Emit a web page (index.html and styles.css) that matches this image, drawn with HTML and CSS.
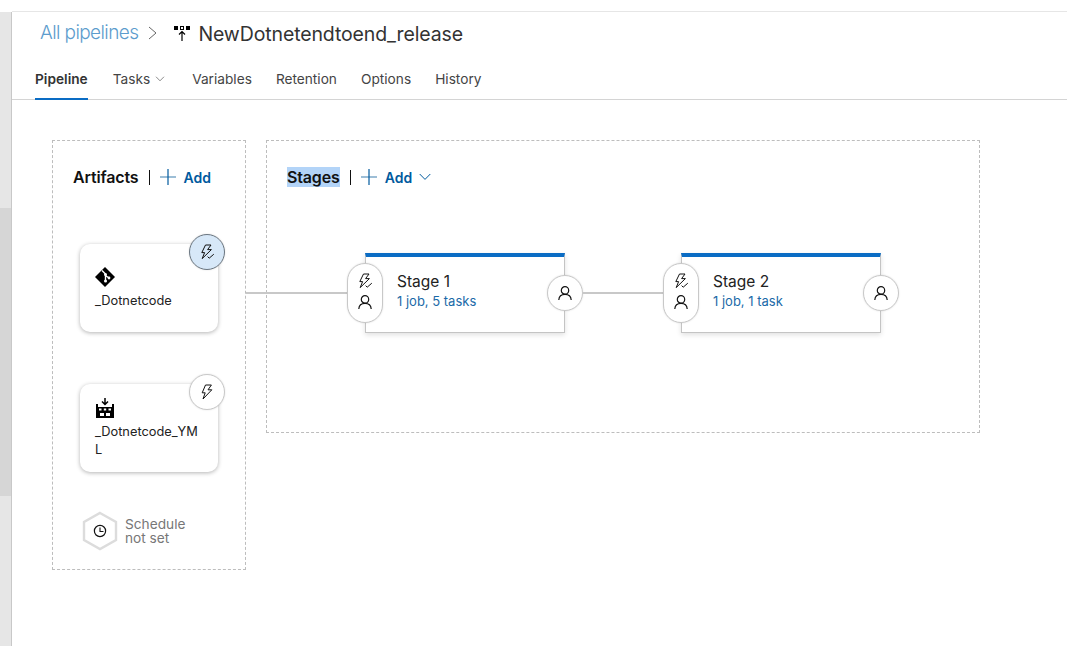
FILE: index.html
```html
<!DOCTYPE html>
<html lang="en">
<head>
<meta charset="UTF-8">
<meta name="viewport" content="width=device-width, initial-scale=1.0">
<title>NewDotnetendtoend_release</title>
<link rel="stylesheet" href="styles.css">
</head>
<body>

<svg class="icon-defs" width="0" height="0" aria-hidden="true">
    <symbol id="bolt-check" viewBox="0 0 16 16">
        <path d="M6.5 1H12L8.6 5.6H12.4L3.2 14.6L5.6 8.6H2.8Z" fill="none" stroke="currentColor" stroke-width="1"/>
        <path d="M8.6 12.6L10.2 14.2L14.8 10.2" fill="none" stroke="currentColor" stroke-width="1"/>
    </symbol>
    <symbol id="bolt" viewBox="0 0 16 16">
        <path d="M6.5 1H12.4L9 5.8H12.8L4 15L6.2 8.8H3.2Z" fill="none" stroke="currentColor" stroke-width="1"/>
    </symbol>
    <symbol id="person" viewBox="0 0 16 16">
        <circle cx="8" cy="5.4" r="3.7" fill="none" stroke="currentColor" stroke-width="1.2"/>
        <path d="M1.8 15C2 11.6 4.4 9.4 8 9.4S14 11.6 14.2 15" fill="none" stroke="currentColor" stroke-width="1.2"/>
    </symbol>
    <symbol id="plus" viewBox="0 0 16 16">
        <path d="M0 8H16" stroke="#5d93bb" stroke-width="1.2"/>
        <path d="M8 0V16" stroke="#005a9e" stroke-width="1.2"/>
    </symbol>
    <symbol id="chevron" viewBox="0 0 12 8">
        <path d="M.7 1L6 6.4L11.3 1" fill="none" stroke="currentColor" stroke-width="1"/>
    </symbol>
</svg>

<div class="app">
    <div class="rail">
        <div class="rail-thumb"></div>
    </div>

    <div class="main">
        <div class="title-row">
            <a class="crumb" href="#">All pipelines</a>
            <svg class="crumb-sep" width="9" height="14" viewBox="0 0 9 14"><path d="M1 1L8 7L1 13" fill="none" stroke="#666" stroke-width="1"/></svg>
            <svg class="release-icon" width="16" height="16" viewBox="0 0 16 16">
                <rect x="0" y="1" width="4" height="4"/>
                <rect x="6.5" y="1.5" width="3" height="3" fill="none" stroke="#000"/>
                <rect x="12" y="1" width="4" height="4"/>
                <path d="M8 16V7M5 9.5L8 6.5L11 9.5" fill="none" stroke="#000" stroke-width="1.2"/>
            </svg>
            <h1 class="title">NewDotnetendtoend_release</h1>
        </div>

        <div class="tabs">
            <a class="tab active" href="#">Pipeline</a>
            <a class="tab" href="#">Tasks <svg class="tab-chevron" width="10" height="6"><use href="#chevron"/></svg></a>
            <a class="tab" href="#">Variables</a>
            <a class="tab" href="#">Retention</a>
            <a class="tab" href="#">Options</a>
            <a class="tab" href="#">History</a>
        </div>

        <div class="canvas">
            <div class="box artifacts">
                <div class="box-head">
                    <span class="box-title">Artifacts</span>
                    <span class="divider"></span>
                    <a class="add" href="#"><svg width="16" height="16"><use href="#plus"/></svg>Add</a>
                </div>

                <div class="artifact first">
                    <svg class="artifact-icon" width="20" height="20" viewBox="0 0 20 20">
                        <path d="M10 0L20 10L10 20L0 10Z" fill="#000"/>
                        <path d="M7 3.5L10.5 7V15M10.5 8.5L14 11" fill="none" stroke="#fff" stroke-width="1.4"/>
                        <circle cx="10.5" cy="7.5" r="1.5" fill="#fff"/>
                        <circle cx="10.5" cy="14" r="1.5" fill="#fff"/>
                        <circle cx="14" cy="11" r="1.4" fill="#fff"/>
                    </svg>
                    <div class="artifact-name">_Dotnetcode</div>
                    <span class="badge active"><svg width="16" height="16"><use href="#bolt-check"/></svg></span>
                </div>

                <div class="artifact">
                    <svg class="artifact-icon" width="20" height="20" viewBox="0 0 20 20">
                        <path d="M10 0V6M7 3.5L10 6.5L13 3.5" fill="none" stroke="#000" stroke-width="1.5"/>
                        <path d="M1 6H3V9H17V6H19V20H1Z" fill="#000"/>
                        <path d="M4 10.5H6.5V12.5H4ZM8.8 10.5H11.2V12.5H8.8ZM13.5 10.5H16V12.5H13.5ZM5 15H9V18H5ZM11 15H15V18H11Z" fill="#fff"/>
                    </svg>
                    <div class="artifact-name">_Dotnetcode_YML</div>
                    <span class="badge"><svg width="16" height="16"><use href="#bolt"/></svg></span>
                </div>

                <div class="schedule">
                    <svg class="hexagon" width="36" height="40" viewBox="0 0 36 40">
                        <path d="M18 2L34 11V29L18 38L2 29V11Z" fill="#fff" stroke="#dcdcdc" stroke-width="2.4"/>
                        <circle cx="18" cy="20" r="5.6" fill="none" stroke="#111" stroke-width="1.2"/>
                        <path d="M18 16.5V20.5H21.5" fill="none" stroke="#111" stroke-width="1.1"/>
                    </svg>
                    <span class="schedule-text">Schedule<br>not set</span>
                </div>
            </div>

            <div class="box stages">
                <div class="box-head">
                    <span class="box-title selected">Stages</span>
                    <span class="divider"></span>
                    <a class="add" href="#"><svg width="16" height="16"><use href="#plus"/></svg>Add<svg class="add-chevron" width="12" height="8"><use href="#chevron"/></svg></a>
                </div>

                <div class="stage-row">
                    <div class="stage">
                        <div class="stage-name">Stage 1</div>
                        <a class="stage-jobs" href="#">1 job, 5 tasks</a>
                        <span class="pill"><svg width="16" height="16"><use href="#bolt-check"/></svg><svg width="16" height="16"><use href="#person"/></svg></span>
                        <span class="badge post"><svg width="16" height="16"><use href="#person"/></svg></span>
                    </div>
                    <div class="stage">
                        <div class="stage-name">Stage 2</div>
                        <a class="stage-jobs" href="#">1 job, 1 task</a>
                        <span class="pill"><svg width="16" height="16"><use href="#bolt-check"/></svg><svg width="16" height="16"><use href="#person"/></svg></span>
                        <span class="badge post"><svg width="16" height="16"><use href="#person"/></svg></span>
                    </div>
                </div>
            </div>
        </div>
    </div>
</div>

</body>
</html>
```

FILE: styles.css
```css
* {
    box-sizing: border-box;
}
html, body {
    height: 100%;
}
body {
    margin: 0;
    font-family: Inter, "Liberation Sans", sans-serif;
    color: #212121;
    background-color: #fff;
    overflow: hidden;
}
a {
    text-decoration: none;
}
.icon-defs {
    position: absolute;
}
.app {
    display: flex;
    height: 100%;
    padding-top: 11px;
}
.rail {
    width: 12px;
    flex-shrink: 0;
    padding-top: 196px;
    margin-top: 1px;
    background-color: #e6e6e6;
    border-right: 1px solid #c8c8c8;
}
.rail-thumb {
    height: 288px;
    background-color: #d6d6d6;
}
.main {
    flex: 1;
    border-top: 1px solid #e6e6e6;
}
.title-row {
    display: flex;
    align-items: center;
    height: 40px;
    padding-left: 28px;
}
.crumb {
    font-size: 19px;
    font-weight: 300;
    letter-spacing: -0.6px;
    color: #5c9ccd;
}
.crumb-sep {
    margin: 1px 0 0 10px;
}
.release-icon {
    margin: 1px 0 0 17px;
}
.title {
    margin: 4px 0 0 8px;
    font-size: 19.5px;
    font-weight: 400;
    letter-spacing: -0.12px;
    color: #333;
}
.tabs {
    display: flex;
    gap: 24px;
    height: 48px;
    padding: 0 0 0 23px;
    border-bottom: 1px solid #d4d4d4;
}
.tab {
    display: flex;
    align-items: center;
    gap: 5px;
    height: 48px;
    padding-top: 8px;
    font-size: 13.7px;
    color: #444;
    border-bottom: 2px solid transparent;
}
.tab.active {
    font-weight: 600;
    color: #333;
    border-bottom-color: #0a6cc4;
    margin-right: 1px;
}
.tab-chevron {
    color: #666;
    margin-left: 0;
    margin-right: 3px;
}
.canvas {
    display: flex;
    align-items: flex-start;
    gap: 20px;
    padding: 40px 0 0 40px;
}
.box {
    border: 1px dashed #bdbdbd;
}
.artifacts {
    width: 194px;
    height: 430px;
    padding: 27px 0 0 20px;
}
.stages {
    width: 714px;
    height: 293px;
    padding: 27px 0 0 20px;
}
.box-head {
    display: flex;
    align-items: center;
    height: 18px;
}
.box-title {
    font-size: 16px;
    font-weight: 600;
    letter-spacing: -0.15px;
    color: #111;
}
.selected {
    background-color: #b3d4f8;
}
.divider {
    width: 1px;
    height: 15px;
    margin: 0 10px;
    background-color: #111;
}
.add {
    display: flex;
    align-items: center;
    gap: 8px;
    font-size: 14px;
    font-weight: 600;
    color: #005a9e;
}
.add-chevron {
    margin-left: -1px;
    color: #005a9e;
}
.artifact {
    display: flex;
    flex-direction: column;
    justify-content: center;
    position: relative;
    width: 138px;
    height: 88px;
    margin: 0 0 52px 7px;
    padding-left: 15px;
    background-color: #fff;
    border-radius: 10px;
    box-shadow: 0 1px 4px rgba(0, 0, 0, 0.3);
}
.artifact.first {
    margin-top: 58px;
}
.artifact-icon {
    flex-shrink: 0;
}
.artifact-name {
    width: 108px;
    margin-top: 5px;
    font-size: 12.8px;
    line-height: 18px;
    color: #222;
    word-break: break-all;
}
.badge {
    display: flex;
    align-items: center;
    justify-content: center;
    position: absolute;
    top: -10px;
    right: -7px;
    width: 36px;
    height: 36px;
    color: #111;
    background-color: #fff;
    border: 1px solid #c8c8c8;
    border-radius: 50%;
    box-shadow: 0 0 2px rgba(0, 0, 0, 0.12);
}
.badge.active {
    background-color: #d7e8f8;
    border-color: #6b7680;
}
.badge.post {
    top: 18px;
    right: -19px;
}
.schedule {
    display: flex;
    align-items: center;
    gap: 7px;
    margin: -13px 0 0 9px;
}
.schedule-text {
    font-size: 13.7px;
    line-height: 14px;
    color: #777;
}
.stage-row {
    display: flex;
    align-items: flex-start;
    gap: 116px;
    margin: 67px 0 0 78px;
}
.stage {
    position: relative;
    width: 200px;
    height: 80px;
    padding: 15px 0 0 31px;
    background-color: #fff;
    border: 1px solid #c4c4c4;
    border-top: 4px solid #0a6cc4;
    box-shadow: 0 2px 5px rgba(0, 0, 0, 0.12);
}
/* line from the previous box into this stage */
.stage::before {
    content: "";
    position: absolute;
    top: 35px;
    left: -120px;
    width: 101px;
    height: 2px;
    background-color: #c8c8c8;
}
.stage + .stage::before {
    left: -99px;
    width: 80px;
}
.stage-name {
    font-size: 15.5px;
    line-height: 20px;
    color: #222;
}
.stage-jobs {
    display: block;
    margin-top: 1px;
    font-size: 13px;
    line-height: 16px;
    color: #1a6aa8;
}
.pill {
    display: flex;
    flex-direction: column;
    align-items: center;
    gap: 5px;
    position: absolute;
    top: 6px;
    left: -19px;
    width: 36px;
    height: 60px;
    padding-top: 9px;
    color: #111;
    background-color: #fff;
    border: 1px solid #c8c8c8;
    border-radius: 18px;
    box-shadow: 0 0 2px rgba(0, 0, 0, 0.12);
}
```
